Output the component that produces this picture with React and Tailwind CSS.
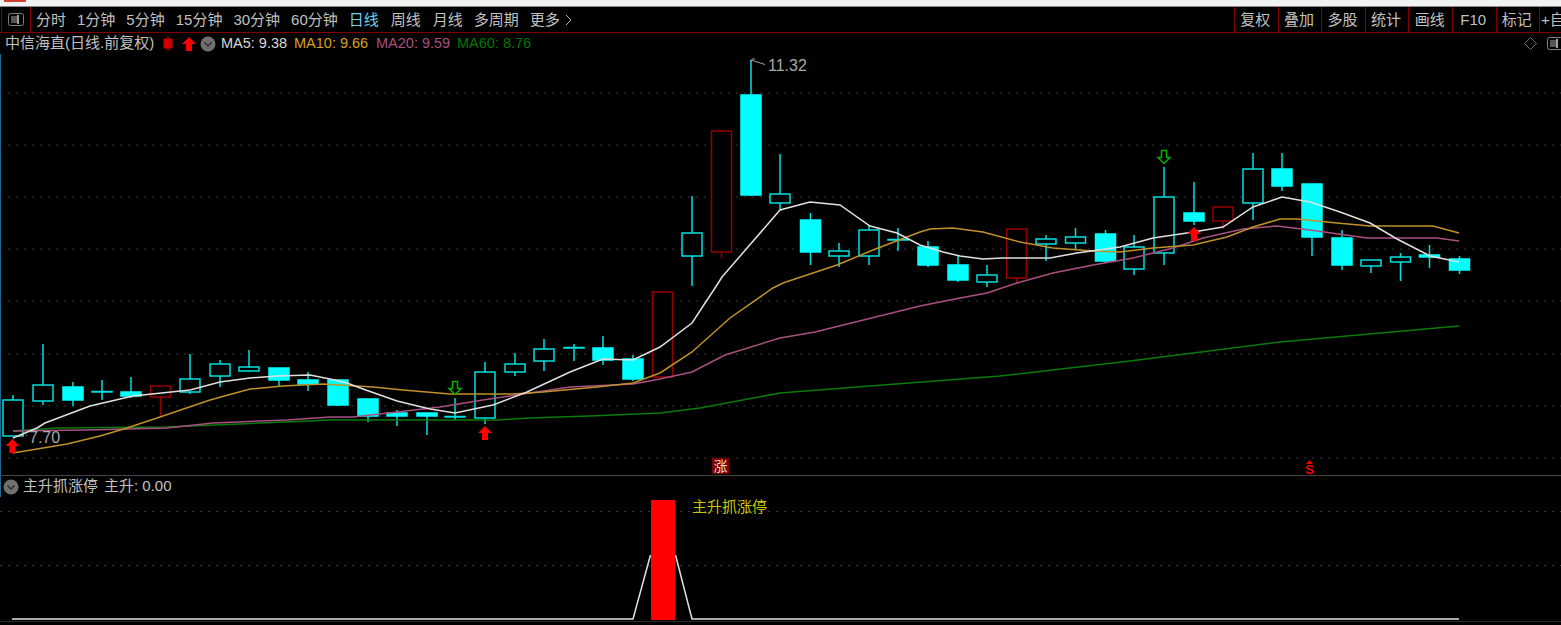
const periods = ['分时', '1分钟', '5分钟', '15分钟', '30分钟', '60分钟', '日线', '周线', '月线', '多周期', '更多']
const tools = ['复权', '叠加', '多股', '统计', '画线', 'F10', '标记', '+自选']

// x, wick top, wick bottom, body top, body bottom, kind (h hollow, s solid, r red)
const candles = [
  [13, 395, 436, 400, 436, 'h'], [43, 344, 405, 385, 401, 'h'], [73, 382, 406, 387, 400, 's'],
  [102, 380, 400, 391.5, 392, 'h'], [131, 377, 398, 392, 396, 's'], [160.5, 386, 417, 386, 397, 'r'],
  [190, 354, 394, 379, 392, 'h'], [220, 360, 387, 364, 376, 'h'], [249, 350, 372, 367, 371, 'h'],
  [279, 368, 387, 368, 380, 's'], [308, 372, 391, 380, 384, 's'], [338, 380, 406, 380, 405, 's'],
  [368, 399, 422, 399, 416, 's'], [397, 410, 426, 413, 416, 's'], [427, 413, 435, 413, 416, 's'],
  [455, 398, 420, 416.5, 417, 'h'], [485, 362, 424, 372, 418, 'h'], [515, 353, 376, 364, 372, 'h'],
  [544, 339, 371, 349, 361, 'h'], [574, 344, 361, 347.5, 348, 'h'], [603, 336, 365, 348, 360, 's'],
  [633, 355, 381, 359, 379, 's'], [662.5, 292, 377, 292, 377, 'r'], [692, 196, 286, 233, 256, 'h'],
  [721.5, 131, 258, 131, 252, 'r'], [751, 60, 196, 95, 195, 's'], [780, 154, 210, 194, 203, 'h'],
  [810.5, 213, 265, 220, 252, 's'], [839, 243, 267, 251, 256, 'h'], [869, 225, 265, 230, 256, 'h'],
  [898, 228, 251, 239.5, 240, 'h'], [928, 241, 267, 247, 265, 's'], [958, 255, 282, 265, 280, 's'],
  [987, 265, 287, 275, 282, 'h'], [1016.5, 229, 283, 229, 278, 'r'], [1046, 235, 261, 239, 244, 'h'],
  [1075.5, 228, 250, 237, 243, 'h'], [1105.5, 230, 263, 234, 261, 's'], [1134, 235, 275, 247, 269, 'h'],
  [1164, 167, 265, 197, 253, 'h'], [1194, 182, 225, 213, 221, 's'], [1223, 207, 229, 207, 221, 'r'],
  [1253, 153, 220, 169, 203, 'h'], [1282, 153, 191, 169, 186, 's'], [1312, 184, 256, 184, 237, 's'],
  [1342, 230, 270, 238, 265, 's'], [1371, 260, 273, 260, 266, 'h'], [1400.5, 253, 281, 257, 262, 'h'],
  [1429.5, 245, 268, 255, 257, 's'], [1459.5, 256, 274, 259, 270, 's'],
]

const ma5 = '13,438 37,428 45,423 90,406 133,396 190,390 220,382 250,378 277,376 310,375 330,379 347,383 363,389 397,401 430,409 455,413 493,405 527,392 570,372 603,359 633,360 660,347 692,323 715,288 722,277 780,210 810,202 840,205 870,226 897,233 920,245 943,252 960,256 983,259 1002,258 1050,258 1077,253 1120,247 1153,238 1187,233 1223,227 1253,207 1282,197 1310,202 1340,212 1370,223 1397,239 1430,256 1459,262'
const ma10 = '13,453 67,444 100,436 127,428 160,417 210,400 250,389 283,386 323,384 373,387 403,390 450,394 513,394 543,392 597,387 633,383 660,373 692,352 730,318 773,288 783,283 837,265 873,250 920,232 930,229 953,228 983,232 1020,242 1053,248 1093,251 1120,252 1153,248 1193,245 1227,237 1253,227 1280,219 1297,219 1337,223 1370,226 1433,226 1459,233'
const ma20 = '13,431 87,430 167,428 213,423 287,420 330,417 353,417 397,412 440,407 483,400 530,393 570,387 633,384 660,379 692,372 725,355 780,338 815,332 920,306 955,299 987,293 1017,283 1053,273 1093,265 1133,258 1173,248 1203,238 1243,229 1277,226 1310,230 1367,238 1437,238 1459,241'
const ma60 = '13,431 57,428 167,427 330,420 497,420 530,418 590,416 660,413 700,408 780,393 870,386 1000,376 1130,361 1280,342 1459,326'

const gridY = [93, 145, 197, 249, 301, 354, 406, 458]

const Grid = ({ y }) => <line x1="0" x2="1561" y1={y} y2={y} stroke="#3a3a3a" strokeDasharray="2 6" />

const Candle = ({ c }) => {
  const [x, top, bottom, bodyTop, bodyBottom, kind] = c
  const line = kind === 'r' ? '#960000' : '#00e0e0'
  return (
    <g>
      <line x1={x} x2={x} y1={top} y2={bottom} stroke={line} strokeWidth="1.5" />
      <rect
        x={x - 10}
        y={bodyTop}
        width="20"
        height={bodyBottom - bodyTop}
        fill={kind === 's' ? '#00ffff' : '#000'}
        stroke={kind === 's' ? '#00ffff' : line}
        strokeWidth="1.5"
      />
    </g>
  )
}

const UpArrow = ({ x, y }) => (
  <polygon
    points={`${x},${y} ${x + 7},${y + 7} ${x + 3},${y + 7} ${x + 3},${y + 14} ${x - 3},${y + 14} ${x - 3},${y + 7} ${x - 7},${y + 7}`}
    fill="#ff0000"
  />
)

const DownArrow = ({ x, y }) => (
  <polygon
    points={`${x - 2.5},${y} ${x + 2.5},${y} ${x + 2.5},${y + 7} ${x + 6},${y + 7} ${x},${y + 13} ${x - 6},${y + 7} ${x - 2.5},${y + 7}`}
    fill="none"
    stroke="#00b000"
    strokeWidth="1.5"
  />
)

const PanelIcon = () => (
  <svg width="16" height="13" viewBox="0 0 16 13">
    <rect x="0.5" y="0.5" width="15" height="12" rx="2" fill="none" stroke="#808080" />
    <rect x="3" y="3" width="6" height="7" fill="#555" />
    <rect x="9" y="2" width="2" height="9" fill="#a0a0a0" />
  </svg>
)

const ChevronCircle = () => (
  <svg width="16" height="16" viewBox="0 0 16 16">
    <circle cx="8" cy="8" r="7.5" fill="#707070" />
    <path d="M4.5 6.5 L8 10 L11.5 6.5" fill="none" stroke="#2c2c2c" strokeWidth="1.5" />
  </svg>
)

const App = () => {
  return (
    <div className="w-[1561px] h-[625px] overflow-hidden bg-black text-[15px] text-[#c0c0c0] font-['Liberation_Sans','Noto_Sans_CJK_SC',sans-serif]">
      {/* window strip */}
      <div className="h-[7px] bg-[#f2f2f2] border-b border-[#8a8a8a]">
        <div className="ml-1 w-[22px] h-[2px] bg-[#d04030]" />
      </div>

      {/* toolbar */}
      <div className="flex h-[26px] border-b border-[#800000] leading-[25px]">
        <div className="flex w-[1234px] shrink-0">
          <div className="flex items-center justify-center w-[30px] ml-px border-l border-r border-[#800000]">
            <PanelIcon />
          </div>
          <div className="flex items-center gap-[11px] pl-[5px]">
            {periods.map((p) => (
              <span
                key={p}
                className={p === '日线' ? 'mr-px text-[#70d0e8]' : p === '周线' ? 'mr-px' : ''}
              >
                {p}
              </span>
            ))}
            <svg width="7" height="12" viewBox="0 0 7 12" className="-ml-[6px]">
              <path d="M1 1 L6 6 L1 11" fill="none" stroke="#b0b0b0" />
            </svg>
          </div>
        </div>
        {tools.map((t) => (
          <div key={t} className="w-[43.6px] shrink-0 pr-[2px] text-center whitespace-nowrap border-l border-[#800000]">{t}</div>
        ))}
      </div>

      {/* quote line */}
      <div className="flex items-center h-[21px] pl-[5px]">
        <span className="w-[158px] shrink-0 whitespace-nowrap">中信海直(日线.前复权)</span>
        <svg width="10" height="15" viewBox="0 0 10 15" className="shrink-0">
          <line x1="5" x2="5" y1="0" y2="15" stroke="#e00000" />
          <rect x="0.5" y="2.5" width="9" height="10" rx="1" fill="#d00000" />
        </svg>
        <svg width="14" height="14" viewBox="0 0 14 14" className="ml-[9px] shrink-0">
          <polygon points="7,0 14,7 10,7 10,14 4,14 4,7 0,7" fill="#ff0000" />
        </svg>
        <span className="ml-[4px] shrink-0"><ChevronCircle /></span>
        <div className="flex gap-[7px] ml-[5px] text-[14.5px] whitespace-nowrap">
          <span className="w-[66px] text-[#d8d8d8]">MA5: 9.38</span>
          <span className="w-[75px] text-[#d8a020]">MA10: 9.66</span>
          <span className="w-[74px] text-[#a85080]">MA20: 9.59</span>
          <span className="text-[#007800]">MA60: 8.76</span>
        </div>
        <div className="flex items-center gap-[10px] ml-auto -mr-[2px]">
          <svg width="13" height="13" viewBox="0 0 13 13">
            <path d="M6.5 0.5 L12.5 6.5 L6.5 12.5 L0.5 6.5 Z" fill="none" stroke="#707070" />
          </svg>
          <PanelIcon />
        </div>
      </div>

      {/* main chart */}
      <svg width="1561" height="421" viewBox="0 54 1561 421" className="block overflow-visible">
        <line x1="0.5" x2="0.5" y1="54" y2="475" stroke="#1c6a90" />
        {gridY.map((y) => <Grid key={y} y={y} />)}
        {candles.map((c) => <Candle key={c[0]} c={c} />)}
        <polyline points={ma60} fill="none" stroke="#0a7a0a" strokeWidth="1.5" />
        <polyline points={ma20} fill="none" stroke="#a85080" strokeWidth="1.5" />
        <polyline points={ma10} fill="none" stroke="#c0902a" strokeWidth="1.5" />
        <polyline points={ma5} fill="none" stroke="#e0e0e0" strokeWidth="1.5" />
        <path d="M751 60 L765 64.5 M751 62 Q751 58 755 59" fill="none" stroke="#a0a0a0" />
        <text x="768" y="71" fontSize="16" fill="#a8a8a8">11.32</text>
        <path d="M14 437 L27 435" fill="none" stroke="#b0b0b0" strokeDasharray="2 2" />
        <text x="29" y="443" fontSize="16" fill="#a8a8a8">7.70</text>
        <UpArrow x={12.5} y={439} />
        <UpArrow x={485} y={426} />
        <UpArrow x={1194} y={227} />
        <DownArrow x={455} y={381.5} />
        <DownArrow x={1164} y={150.5} />
        <rect x="712" y="458" width="17" height="16" fill="#7a0000" />
        <text x="720.5" y="471" fontSize="14" fill="#f0d0d0" textAnchor="middle">涨</text>
        <polygon points="1309.5,460 1313,464 1306,464" fill="#f00000" />
        <text x="1309.5" y="474" fontSize="13" fontWeight="700" fill="#f00000" textAnchor="middle">S</text>
      </svg>

      {/* indicator panel */}
      <div className="border-t border-[#444444]">
        <div className="flex items-center h-[21px] pl-[2px] gap-[4px] border-l border-[#1c6a90]">
          <ChevronCircle />
          <span>主升抓涨停</span>
          <span className="ml-[2px]">主升: 0.00</span>
        </div>
        <svg width="1561" height="128" viewBox="0 497 1561 128" className="block">
          <Grid y={511.5} />
          <Grid y={565.5} />
          <line x1="0" x2="1561" y1="621.5" y2="621.5" stroke="#2c2c2c" />
          <polyline points="12,619 633,619 650.5,555" fill="none" stroke="#e0e0e0" strokeWidth="1.5" />
          <polyline points="675.5,555 692,619 1459,619" fill="none" stroke="#e0e0e0" strokeWidth="1.5" />
          <rect x="651" y="500" width="24" height="120" fill="#ff0000" />
          <text x="692" y="512" fontSize="15" fill="#c8c800">主升抓涨停</text>
        </svg>
      </div>
    </div>
  )
}

export default App
